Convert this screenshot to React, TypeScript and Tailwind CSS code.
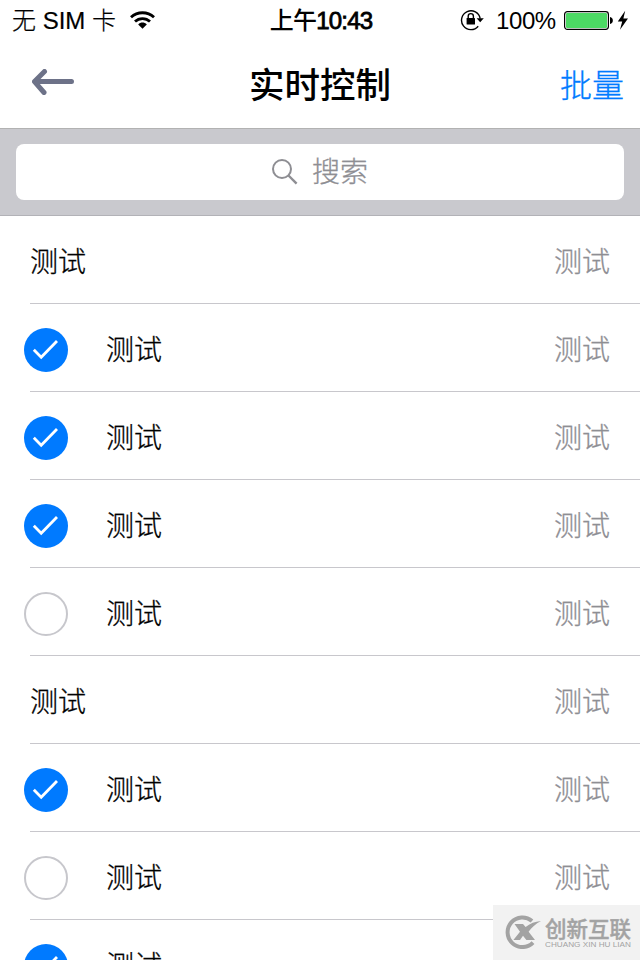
interface Item {
  title: string
  detail: string
  // undefined = plain row without a check circle
  checked?: boolean
}

const items: Item[] = [
  { title: "测试", detail: "测试" },
  { title: "测试", detail: "测试", checked: true },
  { title: "测试", detail: "测试", checked: true },
  { title: "测试", detail: "测试", checked: true },
  { title: "测试", detail: "测试", checked: false },
  { title: "测试", detail: "测试" },
  { title: "测试", detail: "测试", checked: true },
  { title: "测试", detail: "测试", checked: false },
  { title: "测试", detail: "测试", checked: true },
]

function WifiIcon() {
  return (
    <svg className="mb-0.5 ml-3.5 h-[18px] w-[25px] shrink-0" viewBox="0 0 25 18" fill="none" stroke="#000" strokeWidth="2.8">
      <path d="M1 6.3C7.5 0.2 17.5 0.2 24 6.3" />
      <path d="M5 10.6C9.2 6.6 15.8 6.6 20 10.6" />
      <path d="M12.5 17.8L8.2 13.4C10.6 11 14.4 11 16.8 13.4Z" fill="#000" stroke="none" />
    </svg>
  )
}

function RotationLockIcon() {
  return (
    <svg className="mb-0.5 h-[22px] w-6 shrink-0" viewBox="0 0 24 22" fill="none" stroke="#000">
      <path d="M18.2 17.2A9.4 9.4 0 1 1 20.2 9.6" strokeWidth="1.4" />
      <path d="M16.6 9.2H23.8L20.2 13.2Z" fill="#000" stroke="none" />
      <rect x="6.6" y="9" width="8.4" height="6.6" rx="0.6" fill="#000" stroke="none" />
      <path d="M8.2 9.6V7.2a2.6 2.6 0 0 1 5.2 0V9.6" strokeWidth="1.4" />
    </svg>
  )
}

function BatteryIcon() {
  return (
    <svg className="ml-2 h-[22px] w-[66px] shrink-0" viewBox="0 0 66 22">
      <rect x="0.6" y="1.6" width="43.8" height="17.8" rx="2.8" fill="#fff" stroke="#000" strokeWidth="1.2" />
      <rect x="2" y="3" width="41" height="15" rx="1.2" fill="#4cd964" />
      <path d="M46 7C49.8 7.4 49.8 13.6 46 14Z" fill="#000" />
      <path d="M61.2 0.8L53.8 11.4H58.2L56 19.8L64 8.6H59.4Z" fill="#000" />
    </svg>
  )
}

function StatusBar() {
  return (
    <div className="grid h-10 grid-cols-[1fr_auto_1fr] items-center pl-3 pr-2.5 pt-0.5 text-2xl leading-[38px]">
      <div className="flex items-center">
        <span className="whitespace-nowrap font-light [-webkit-text-stroke:0.2px]">无 SIM 卡</span>
        <WifiIcon />
      </div>
      <span className="whitespace-nowrap text-center font-medium tracking-[-0.8px]">
        上午<span className="[-webkit-text-stroke:0.8px]">10:43</span>
      </span>
      <div className="flex items-center justify-end">
        <RotationLockIcon />
        <span className="ml-3 w-[60px] tracking-[-0.4px]">100%</span>
        <BatteryIcon />
      </div>
    </div>
  )
}

function NavBar() {
  return (
    <header className="grid h-[89px] grid-cols-[1fr_auto_1fr] items-center border-b border-[#b2b2b2] pl-4 pr-4">
      <button className="mb-1 ml-4 w-[42px]" aria-label="返回">
        <svg className="h-[26px] w-[42px]" viewBox="0 0 42 26" fill="none" stroke="#6d7288" strokeWidth="5" strokeLinecap="round" strokeLinejoin="round">
          <path d="M39.5 12.6H3M12.5 2.5L2.5 12.6L12 23.5" />
        </svg>
      </button>
      <h1 className="pt-1 text-[35.5px] font-medium leading-[84px]">实时控制</h1>
      <button className="justify-self-end pt-1 text-[32px] font-light leading-[84px] text-[#007aff] [-webkit-text-stroke:0.3px]">
        批量
      </button>
    </header>
  )
}

function SearchBar() {
  return (
    <div className="h-[87px] border-b border-[#b2b2b7] bg-[#c9c9ce] px-4 pt-[15px]">
      <div className="flex h-14 items-center justify-center gap-3.5 rounded-lg bg-white text-[#8e8e93]">
        <svg className="h-[26px] w-[26px]" viewBox="0 0 26 26" fill="none" stroke="currentColor" strokeWidth="2">
          <circle cx="10" cy="10" r="9" />
          <path d="M16.5 16.5L24.6 24.6" strokeWidth="2.4" />
        </svg>
        <span className="pt-0.5 text-[28px] font-light leading-[54px] [-webkit-text-stroke:0.3px]">搜索</span>
      </div>
    </div>
  )
}

function CheckCircle({ checked }: { checked: boolean }) {
  if (!checked) {
    return <span className="h-11 w-11 shrink-0 rounded-full border-2 border-[#c7c7cc]" />
  }
  return (
    <span className="h-11 w-11 shrink-0 rounded-full bg-[#007aff]">
      <svg className="h-11 w-11" viewBox="0 0 44 44" fill="none" stroke="#fff" strokeWidth="2.8">
        <path d="M9.8 21.8L17.2 29.2L33 13" />
      </svg>
    </span>
  )
}

function Row({ item }: { item: Item }) {
  const hasCheck = item.checked !== undefined
  return (
    <li className="h-[88px] shrink-0 pl-[30px]">
      <div className="flex h-full items-center border-b border-[#c8c7cc] pr-[30px] pt-[7px] text-[28px] font-light leading-[80px] [-webkit-text-stroke:0.3px]">
        {hasCheck && (
          <span className="-ml-1.5 mr-[38px] -mt-0.5 flex">
            <CheckCircle checked={item.checked === true} />
          </span>
        )}
        <span>{item.title}</span>
        <span className="ml-auto text-[#8e8e93]">{item.detail}</span>
      </div>
    </li>
  )
}

function Watermark() {
  return (
    <div className="absolute bottom-0 right-0 flex h-[55px] w-[147px] items-center bg-[#f2f2f2] pl-3 text-[#a3a3a3]">
      <svg className="-mt-0.5 h-[34px] w-9 shrink-0" viewBox="0 0 36 34" fill="none">
        <path d="M27 6A14.8 14.8 0 1 0 28 27.6" stroke="#a3a3a3" strokeWidth="4" />
        <path d="M9.5 9H18L20.6 12C25 8.4 30 6.6 36 6C30.5 9 26.5 12.5 23.6 16.8L30 25H21.4L18 20.8L15 25H8.4L15 16.8Z" fill="#a3a3a3" />
      </svg>
      <div className="ml-1 mt-1 flex flex-col">
        <span className="text-[21.5px] font-medium leading-[22px] [-webkit-text-stroke:0.4px]">创新互联</span>
        <svg className="h-[9px] w-[86px]" viewBox="0 0 86 9">
          <text x="0" y="6.4" fontSize="7" textLength="86" lengthAdjust="spacingAndGlyphs" fill="#a3a3a3">
            CHUANG XIN HU LIAN
          </text>
        </svg>
      </div>
    </div>
  )
}

export default function App() {
  return (
    <div className="relative flex h-[960px] w-[640px] flex-col overflow-hidden bg-white font-['Liberation_Sans','Noto_Sans_CJK_SC',sans-serif] text-black">
      <StatusBar />
      <NavBar />
      <SearchBar />
      <ul className="flex min-h-0 flex-1 flex-col overflow-hidden">
        {items.map((item, i) => (
          <Row key={i} item={item} />
        ))}
      </ul>
      <Watermark />
    </div>
  )
}
